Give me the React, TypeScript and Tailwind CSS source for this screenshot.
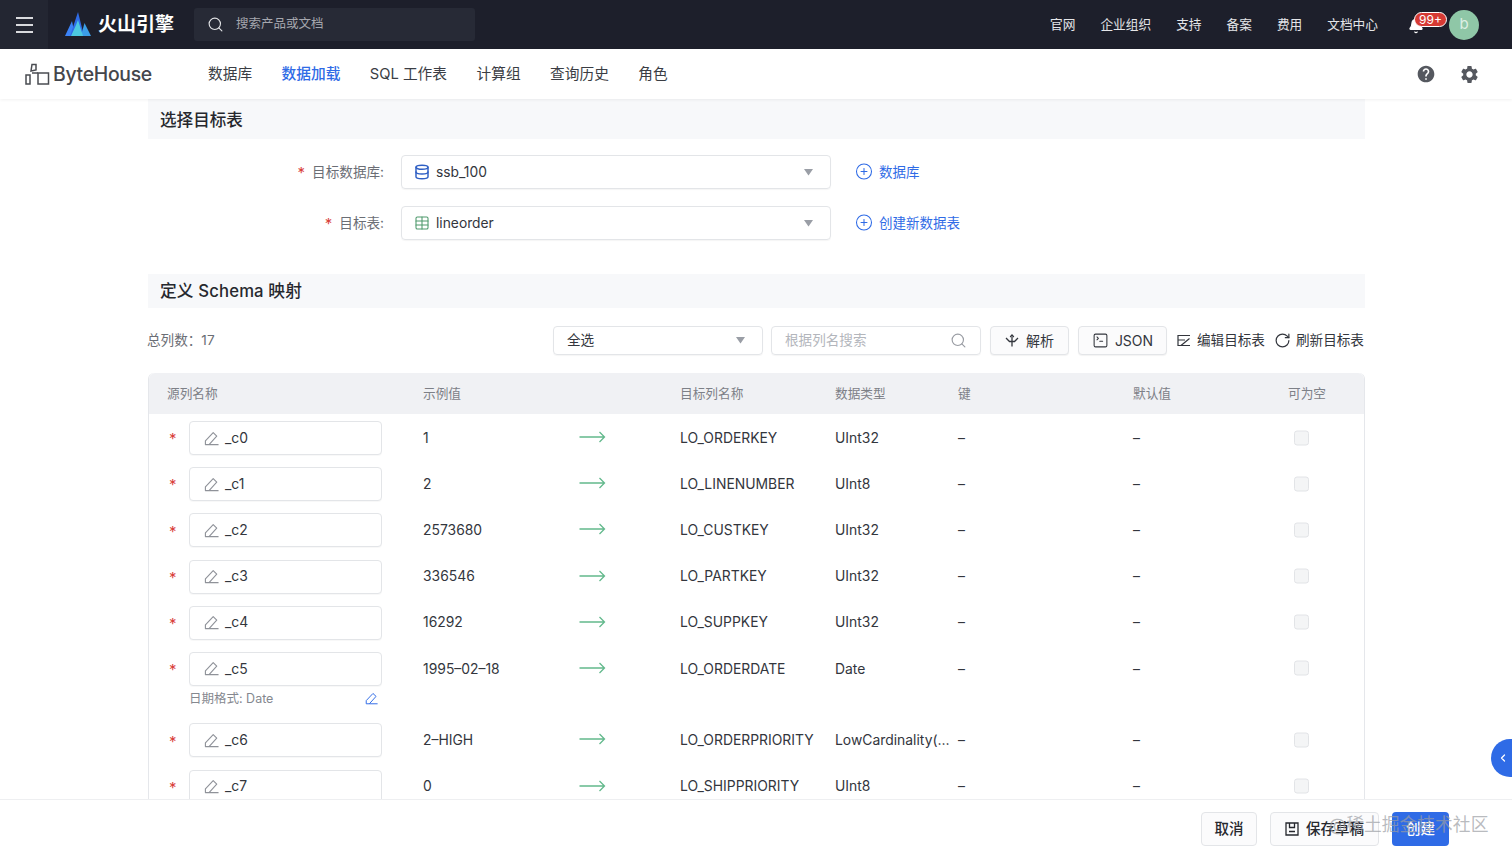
import React from "react";
import { Search, Bell, Database, Table, CirclePlus, RotateCw, SquareTerminal, ChevronLeft } from "lucide-react";
import { MdHelp, MdSettings } from "react-icons/md";

const Pen = ({ className }: { className?: string }) => (
  <svg viewBox="0 0 16 16" fill="none" stroke="currentColor" strokeWidth="1.2" strokeLinejoin="round" className={className}>
    <path d="M1.5 14.5 L1.5 10.6 L9.8 1.8 L13.6 5.4 L5.4 14.5 Z M5.4 14.5 H15.5" />
  </svg>
);

const Arrow = () => (
  <svg width="27" height="12" viewBox="0 0 27 12" fill="none" stroke="#63b98c" strokeWidth="1.3">
    <path d="M0.5 6 H25.5 M20.5 1 L25.5 6 L20.5 11" />
  </svg>
);

const Caret = () => (
  <svg width="9" height="7" viewBox="0 0 9 7" fill="#9a9ea6"><path d="M0 0 H9 L4.5 6.5 Z" /></svg>
);

const rows = [
  { s: "_c0", e: "1", t: "LO_ORDERKEY", d: "UInt32" },
  { s: "_c1", e: "2", t: "LO_LINENUMBER", d: "UInt8" },
  { s: "_c2", e: "2573680", t: "LO_CUSTKEY", d: "UInt32" },
  { s: "_c3", e: "336546", t: "LO_PARTKEY", d: "UInt32" },
  { s: "_c4", e: "16292", t: "LO_SUPPKEY", d: "UInt32" },
  { s: "_c5", e: "1995–02–18", t: "LO_ORDERDATE", d: "Date", date: true },
  { s: "_c6", e: "2–HIGH", t: "LO_ORDERPRIORITY", d: "LowCardinality(…" },
  { s: "_c7", e: "0", t: "LO_SHIPPRIORITY", d: "UInt8" },
];

const grid = "grid grid-cols-[255px_156px_101px_155px_123px_175px_155px_95px]";

function Row({ r }: { r: (typeof rows)[number] }) {
  return (
    <div className={`${grid} ${r.date ? "h-[71.4px]" : "h-[46.2px]"} pt-[7px] text-[13.9px] text-[#33363d]`}>
      <div className="flex items-start pl-[20px]">
        <span className="w-[20px] h-[34px] flex items-center text-[#d9403a] text-[15px] pt-[3px]">*</span>
        <div className="w-[193px]">
          <div className="h-[34px] border border-[#e3e5e8] rounded-[4px] flex items-center pl-[14px] gap-[6px] bg-white shadow-[0_1px_1px_rgba(0,0,0,0.03)]">
            <Pen className="w-[15px] h-[15px] text-[#8f9299]" />
            <span>{r.s}</span>
          </div>
          {r.date && (
            <div className="flex items-center justify-between h-[24px] mt-[1px] pr-[4px] text-[12.5px] text-[#85888f]">
              <span>日期格式: Date</span>
              <Pen className="w-[13px] h-[13px] text-[#2f6be6]" />
            </div>
          )}
        </div>
      </div>
      <div className="h-[34px] flex items-center pl-[19px]">{r.e}</div>
      <div className="h-[34px] flex items-center pl-[19px] -translate-y-[1px]"><Arrow /></div>
      <div className="h-[34px] flex items-center pl-[19px] whitespace-nowrap">{r.t}</div>
      <div className="h-[34px] flex items-center pl-[19px] whitespace-nowrap">{r.d}</div>
      <div className="h-[34px] flex items-center pl-[19px]">–</div>
      <div className="h-[34px] flex items-center pl-[19px]">–</div>
      <div className="h-[34px] flex items-center pl-[25px] -translate-y-[0.5px]">
        <span className="w-[15px] h-[15px] rounded-[3px] border border-[#e2e4e7] bg-[#f4f5f6]" />
      </div>
    </div>
  );
}

function FormRow({ label, icon, value, link }: { label: string; icon: React.ReactNode; value: string; link: string }) {
  return (
    <div className="flex items-center h-[34px]">
      <div className="w-[236px] flex justify-end items-center text-[13.6px] text-[#6b6e75] gap-[7px]">
        <span className="text-[#d9403a] text-[15px] pt-[3px]">*</span>
        <span>{label}</span>
      </div>
      <div className="ml-[17px] w-[430px] h-[34px] border border-[#e3e5e8] rounded-[4px] flex items-center pl-[12px] pr-[17px] shadow-[0_1px_1px_rgba(0,0,0,0.04)]">
        {icon}
        <span className="ml-[6px] flex-1 text-[13.8px] text-[#33363d]">{value}</span>
        <Caret />
      </div>
      <div className="ml-[24px] flex items-center gap-[6px] text-[#2f6be6] text-[13.5px] -translate-y-[0.5px]">
        <CirclePlus className="w-[18px] h-[18px]" strokeWidth={1.4} />
        <span>{link}</span>
      </div>
    </div>
  );
}

export default function App() {
  const font = "font-['Inter','Noto_Sans_CJK_SC',sans-serif]";
  return (
    <div className={`relative w-[1512px] h-[859px] overflow-hidden flex flex-col bg-white ${font}`}>
      <header className="h-[49px] shrink-0 bg-[#1d1f2b] flex items-center text-white">
        <div className="w-[48px] h-full bg-[#232632] flex flex-col items-center justify-center gap-[5px]">
          <span className="w-[17px] h-[2px] bg-[#d9dade]" />
          <span className="w-[17px] h-[2px] bg-[#d9dade]" />
          <span className="w-[17px] h-[2px] bg-[#d9dade]" />
        </div>
        <div className="ml-[17px] flex items-center w-[129px]">
          <svg width="26" height="25" viewBox="0 0 26 25">
            <path d="M0 24 L7 9 L10 24 Z" fill="#3b82f6" />
            <path d="M5 24 L13 0 L19 24 Z" fill="#2f6be6" />
            <path d="M16 24 L19.5 11 L26 24 Z" fill="#3b9ee8" />
            <path d="M6 24 L11 13 L13 8 L18 24 Z" fill="#4cc8e0" />
          </svg>
          <span className="ml-[7px] text-[19px] font-bold whitespace-nowrap pt-[1px]">火山引擎</span>
        </div>
        <div className="h-[33px] w-[281px] bg-[#272a36] rounded-[3px] flex items-center pl-[13px] gap-[12px] text-[#a5a7ae] text-[12.5px]">
          <Search className="w-[17px] h-[17px] text-[#e2e3e6]" strokeWidth={1.6} />
          <span>搜索产品或文档</span>
        </div>
        <div className="flex-1" />
        <nav className="flex items-center gap-[25px] text-[12.7px] text-[#e4e5e8] -translate-y-[0.5px]">
          <span>官网</span><span>企业组织</span><span>支持</span><span>备案</span><span>费用</span><span>文档中心</span>
        </nav>
        <div className="relative ml-[30px] mr-[33px] w-[71px] h-[30px] flex items-center">
          <Bell className="mt-[3px] w-[16px] h-[16px] text-white" fill="white" />
          <span className="absolute left-[6px] top-[2px] h-[15px] w-[33px] rounded-full bg-[#d63a34] border border-white text-[12px] leading-[13px] text-center text-white">99+</span>
          <span className="absolute right-0 top-0 w-[30px] h-[30px] rounded-full bg-[#8fc7a7] text-[#dcefe4] text-[15px] flex items-center justify-center">b</span>
        </div>
      </header>

      <div className="relative z-10 h-[50px] shrink-0 bg-white shadow-[0_1px_3px_rgba(0,0,0,0.06)] flex items-center">
        <div className="ml-[25px] w-[183px] flex items-center">
          <svg width="25" height="22" viewBox="0 0 25 22" fill="none" stroke="#4a4c52" strokeWidth="1.5">
            <rect x="1" y="12" width="4" height="9" />
            <path d="M6 8 L7 1.5 L11 1.5 L11 7 Z" />
            <rect x="13" y="10" width="10.5" height="11" />
            <path d="M7 10 L13 10" />
          </svg>
          <span className="ml-[3px] pt-[2px] text-[19.4px] font-medium text-[#44464c] tracking-[-0.3px]">ByteHouse</span>
        </div>
        <div className="flex items-center gap-[29.5px] text-[14.7px] text-[#3a3d44] pt-[1px]">
          <span>数据库</span>
          <span className="text-[#2f6be6] font-medium">数据加载</span>
          <span>SQL 工作表</span>
          <span>计算组</span>
          <span>查询历史</span>
          <span>角色</span>
        </div>
        <div className="flex-1" />
        <MdHelp className="w-[20px] h-[20px] text-[#55585f]" />
        <MdSettings className="ml-[23px] mr-[32px] w-[21px] h-[21px] text-[#55585f]" />
      </div>

      <main className="flex-1 overflow-hidden pl-[148px] pr-[147.5px]">
        <div className="h-[40px] bg-[#f7f8fa] pl-[12px] pt-[3px] flex items-center text-[16.6px] font-medium text-[#26282e]">选择目标表</div>
        <div className="mt-[16px] flex flex-col gap-[17px]">
          <FormRow label="目标数据库:" icon={<Database className="w-[16px] h-[16px] text-[#2f5fc4]" strokeWidth={2.2} />} value="ssb_100" link="数据库" />
          <FormRow label="目标表:" icon={<Table className="w-[16px] h-[16px] text-[#4f9a6d]" strokeWidth={1.6} />} value="lineorder" link="创建新数据表" />
        </div>
        <div className="mt-[34px] h-[34px] bg-[#f7f8fa] pl-[12px] pt-[2px] flex items-center text-[16.7px] font-medium text-[#26282e] tracking-[0.15px]">定义 Schema 映射</div>

        <div className="mt-[18px] h-[29px] flex items-center text-[13.6px] text-[#33363d]">
          <span className="w-[405px] text-[#6b6e75] -ml-[1px] pr-[1px]">总列数：17</span>
          <div className="ml-[1px] w-[210px] h-[29px] border border-[#e3e5e8] rounded-[4px] flex items-center justify-between pl-[13px] pr-[17px] shadow-[0_1px_1px_rgba(0,0,0,0.04)]">
            <span>全选</span><Caret />
          </div>
          <div className="ml-[8px] w-[210px] h-[29px] border border-[#e3e5e8] rounded-[4px] flex items-center justify-between pl-[13px] pr-[13px] text-[#b3b6bc] shadow-[0_1px_1px_rgba(0,0,0,0.04)]">
            <span>根据列名搜索</span><Search className="w-[17px] h-[17px] text-[#999ca3]" strokeWidth={1.6} />
          </div>
          <div className="ml-[9px] w-[79px] h-[29px] border border-[#e3e5e8] rounded-[4px] bg-[#fbfbfc] flex items-center justify-center gap-[7px] text-[14px] shadow-[0_1px_1px_rgba(0,0,0,0.05)]">
            <svg width="14" height="14" viewBox="0 0 14 14" fill="none" stroke="#33363d" strokeWidth="1.3">
              <path d="M7 3 V12.5 M1 4 L4.5 7.5 H9.5 L13 4 M5.2 3 L7 1 L8.8 3" />
            </svg>
            <span>解析</span>
          </div>
          <div className="ml-[9px] w-[89px] h-[29px] border border-[#e3e5e8] rounded-[4px] bg-[#fbfbfc] flex items-center justify-center gap-[6px] text-[14px] shadow-[0_1px_1px_rgba(0,0,0,0.05)]">
            <SquareTerminal className="w-[17px] h-[17px]" strokeWidth={1.5} />
            <span>JSON</span>
          </div>
          <div className="ml-[10px] flex items-center gap-[6px]">
            <svg width="14" height="13" viewBox="0 0 14 13" fill="none" stroke="#33363d" strokeWidth="1.2">
              <path d="M13 1.5 H1 V11.5 H13 M1 6 H8 M4 11.5 L12.5 4.5 M6 11.5 H13" />
            </svg>
            <span>编辑目标表</span>
          </div>
          <div className="ml-[9px] flex items-center gap-[5px]">
            <RotateCw className="w-[17px] h-[17px]" strokeWidth={1.7} />
            <span>刷新目标表</span>
          </div>
        </div>

        <div className="mt-[18px] border-x border-[#e5e7eb] rounded-t-[6px]">
          <div className={`${grid} h-[41px] items-center bg-[#f0f1f4] rounded-t-[6px] text-[12.7px] text-[#7d8087]`}>
            <span className="pl-[18px]">源列名称</span>
            <span className="pl-[19px]">示例值</span>
            <span />
            <span className="pl-[19px]">目标列名称</span>
            <span className="pl-[19px]">数据类型</span>
            <span className="pl-[19px]">键</span>
            <span className="pl-[19px]">默认值</span>
            <span className="pl-[19px]">可为空</span>
          </div>
          {rows.map((r) => <Row key={r.s} r={r} />)}
        </div>
      </main>

      <footer className="relative z-10 h-[60px] shrink-0 bg-white border-t border-[#eeeff1] flex items-start justify-end pt-[12px] pr-[63px] text-[14.5px]">
        <div className="w-[56px] h-[34px] border border-[#e3e5e8] rounded-[4px] bg-[#fbfbfc] flex items-center justify-center text-[#26282e] font-medium">取消</div>
        <div className="ml-[13px] w-[109px] h-[34px] border border-[#e3e5e8] rounded-[4px] bg-[#fbfbfc] flex items-center justify-center gap-[7px] text-[#26282e] font-medium whitespace-nowrap">
          <svg width="14" height="14" viewBox="0 0 14 14" fill="none" stroke="#26282e" strokeWidth="1.3">
            <path d="M1 1 H13 V13 H1 Z M4.5 1 V5.5 H9.5 V1 M4 9.5 H10" />
          </svg>
          <span>保存草稿</span>
        </div>
        <div className="ml-[13px] w-[57px] h-[34px] rounded-[4px] bg-[#2f6be6] flex items-center justify-center text-white font-medium">创建</div>
      </footer>

      <div className="absolute right-0 top-[739px] z-20 w-[21px] h-[38px] rounded-l-full bg-[#2f6be6] flex items-center justify-end">
        <ChevronLeft className="w-[12px] h-[12px] text-white mr-[3px]" strokeWidth={2.5} />
      </div>
      <div className="absolute left-[1329px] top-[812px] z-30 text-[17.8px] text-[#9a9da3]/70 whitespace-nowrap">@稀土掘金技术社区</div>
    </div>
  );
}
